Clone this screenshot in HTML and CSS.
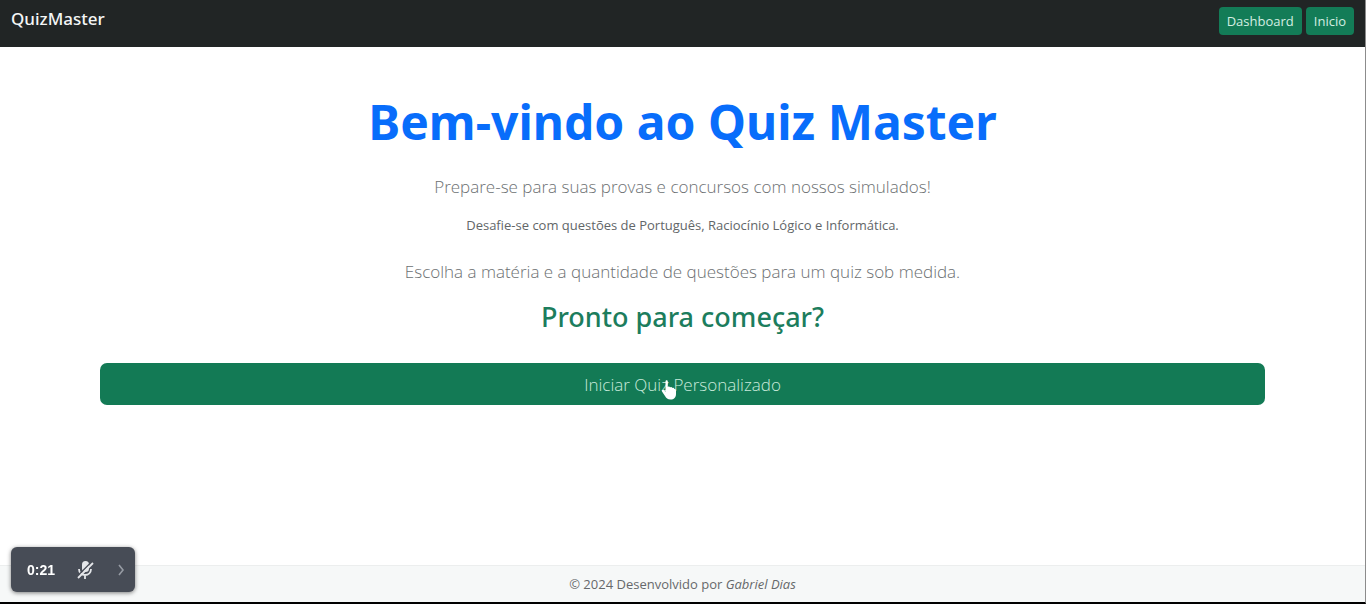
FILE: index.html
```html
<!DOCTYPE html>
<html lang="pt-BR">
<head>
<meta charset="utf-8">
<meta name="viewport" content="width=device-width, initial-scale=1">
<title>QuizMaster</title>
<link rel="stylesheet" href="styles.css">
</head>
<body>
<header class="navbar">
  <a class="brand" href="#">QuizMaster</a>
  <nav class="nav-links">
    <a class="nav-btn" href="#">Dashboard</a>
    <a class="nav-btn" href="#">Inicio</a>
  </nav>
</header>
<main class="hero">
  <h1 class="title">Bem-vindo ao Quiz Master</h1>
  <p class="lead">Prepare-se para suas provas e concursos com nossos simulados!</p>
  <p class="note">Desafie-se com questões de Português, Raciocínio Lógico e Informática.</p>
  <p class="lead">Escolha a matéria e a quantidade de questões para um quiz sob medida.</p>
  <h2 class="subtitle">Pronto para começar?</h2>
  <button class="start" type="button">Iniciar Quiz Personalizado
    <svg class="cursor" viewBox="0 0 16 22" aria-hidden="true"><path d="M4.500 2.500C4.500.8 6.800.8 6.800 2.500V8c.8-.8 2-.5 2.300.4.8-.6 1.900-.3 2.200.6.9-.4 1.900.1 2.100 1 .9-.1 1.600.5 1.600 1.500V15c0 3.500-2 5.500-5.500 5.500-3 0-4.200-1.500-5.500-3.500l-3-4.500c-.8-1.300.8-2.300 1.900-1.300l1.600 1.600z"/></svg>
  </button>
</main>
<footer class="footer">
  <p class="credit">© 2024 Desenvolvido por <em>Gabriel Dias</em></p>
</footer>
<div class="recorder">
  <span class="time">0:21</span>
  <button class="rec-btn" type="button" aria-label="Microfone desativado">
    <svg class="mic" viewBox="0 0 18 20" aria-hidden="true"><rect class="mic-fill" x="6" y="1" width="7" height="11" rx="3.500"/><path class="mic-line" d="M3 9c0 3.500 2.500 6 6 6s6-2.500 6-6M9 15v4"/><path class="mic-gap" d="M1 16.500 16 1.500"/><path class="mic-line" d="M2 18 17 3"/></svg>
  </button>
  <button class="rec-btn" type="button" aria-label="Expandir">
    <svg class="chevron" viewBox="0 0 8 12" aria-hidden="true"><path d="m2 1 4 5-4 5"/></svg>
  </button>
</div>
</body>
</html>
```
FILE: styles.css
```css
* { box-sizing: border-box; }
body {
  margin: 0;
  min-height: 100vh;
  display: flex;
  flex-direction: column;
  background: #fff;
  border-right: 1px solid #8c8c8c;
  border-bottom: 2px solid #000;
  font-family: "Open Sans", "Noto Sans", sans-serif;
}
.navbar {
  display: flex;
  justify-content: space-between;
  align-items: flex-start;
  padding: 7px 11px 12px;
  background: #212525;
}
.brand {
  color: #f4f6f6;
  font-family: "Noto Sans", "Open Sans", sans-serif;
  font-size: 17px;
  line-height: 24px;
  font-weight: 500;
  text-decoration: none;
}
.nav-links { display: flex; gap: 4px; }
.nav-btn {
  padding: 4px 8px;
  border-radius: 4px;
  background: #137c57;
  color: #d3eee2;
  font-size: 13px;
  line-height: 20px;
  text-decoration: none;
}
.hero {
  flex: 1;
  display: flex;
  flex-direction: column;
  align-items: center;
  padding: 43px 100px;
  text-align: center;
}
.title {
  margin: 0 0 21px;
  color: #086dfb;
  font-family: "Noto Sans", "Open Sans", sans-serif;
  font-size: 48px;
  line-height: 64px;
  font-weight: 700;
}
.lead {
  margin: 0;
  color: #6c7072;
  font-size: 17px;
  line-height: 24px;
  font-weight: 300;
}
.note {
  margin: 16px 0 25px;
  color: #626668;
  font-size: 13px;
  line-height: 20px;
}
.subtitle {
  margin: 15px 0 28px;
  color: #1c7d5d;
  font-family: "Noto Sans", "Open Sans", sans-serif;
  font-size: 27px;
  line-height: 36px;
  font-weight: 500;
}
.start {
  position: relative;
  align-self: stretch;
  padding: 10px 16px 8px;
  border: 0;
  border-radius: 7px;
  background: #137a55;
  color: #c9eadb;
  font-family: inherit;
  font-size: 17px;
  line-height: 24px;
  font-weight: 300;
  cursor: pointer;
}
.cursor {
  position: absolute;
  top: 16px;
  left: calc(50% - 22px);
  width: 16px;
  height: 22px;
  fill: #fff;
}
.footer {
  padding: 8px 16px;
  border-top: 1px solid #eceeee;
  background: #f6f8f8;
  text-align: center;
}
.credit {
  margin: 0;
  color: #66696b;
  font-size: 13px;
  line-height: 20px;
}
.recorder {
  position: fixed;
  left: 11px;
  bottom: 12px;
  display: flex;
  align-items: center;
  justify-content: space-between;
  padding: 12px 8px 12px 16px;
  width: 124px;
  height: 45px;
  border-radius: 6px;
  background: #474c56;
  box-shadow: 0 1px 4px #00000080;
}
.time {
  color: #fff;
  font-family: "Liberation Sans", sans-serif;
  font-size: 14px;
  font-weight: 700;
}
.rec-btn {
  display: flex;
  padding: 0;
  border: 0;
  background: none;
}
.mic { width: 18px; height: 20px; }
.mic-fill { fill: #e4e6e9; }
.mic-line { fill: none; stroke: #e4e6e9; stroke-width: 1.8; }
.mic-gap { stroke: #474c56; stroke-width: 1.5; }
.chevron {
  width: 12px;
  height: 12px;
  fill: none;
  stroke: #969ba3;
  stroke-width: 1.6;
}
```
